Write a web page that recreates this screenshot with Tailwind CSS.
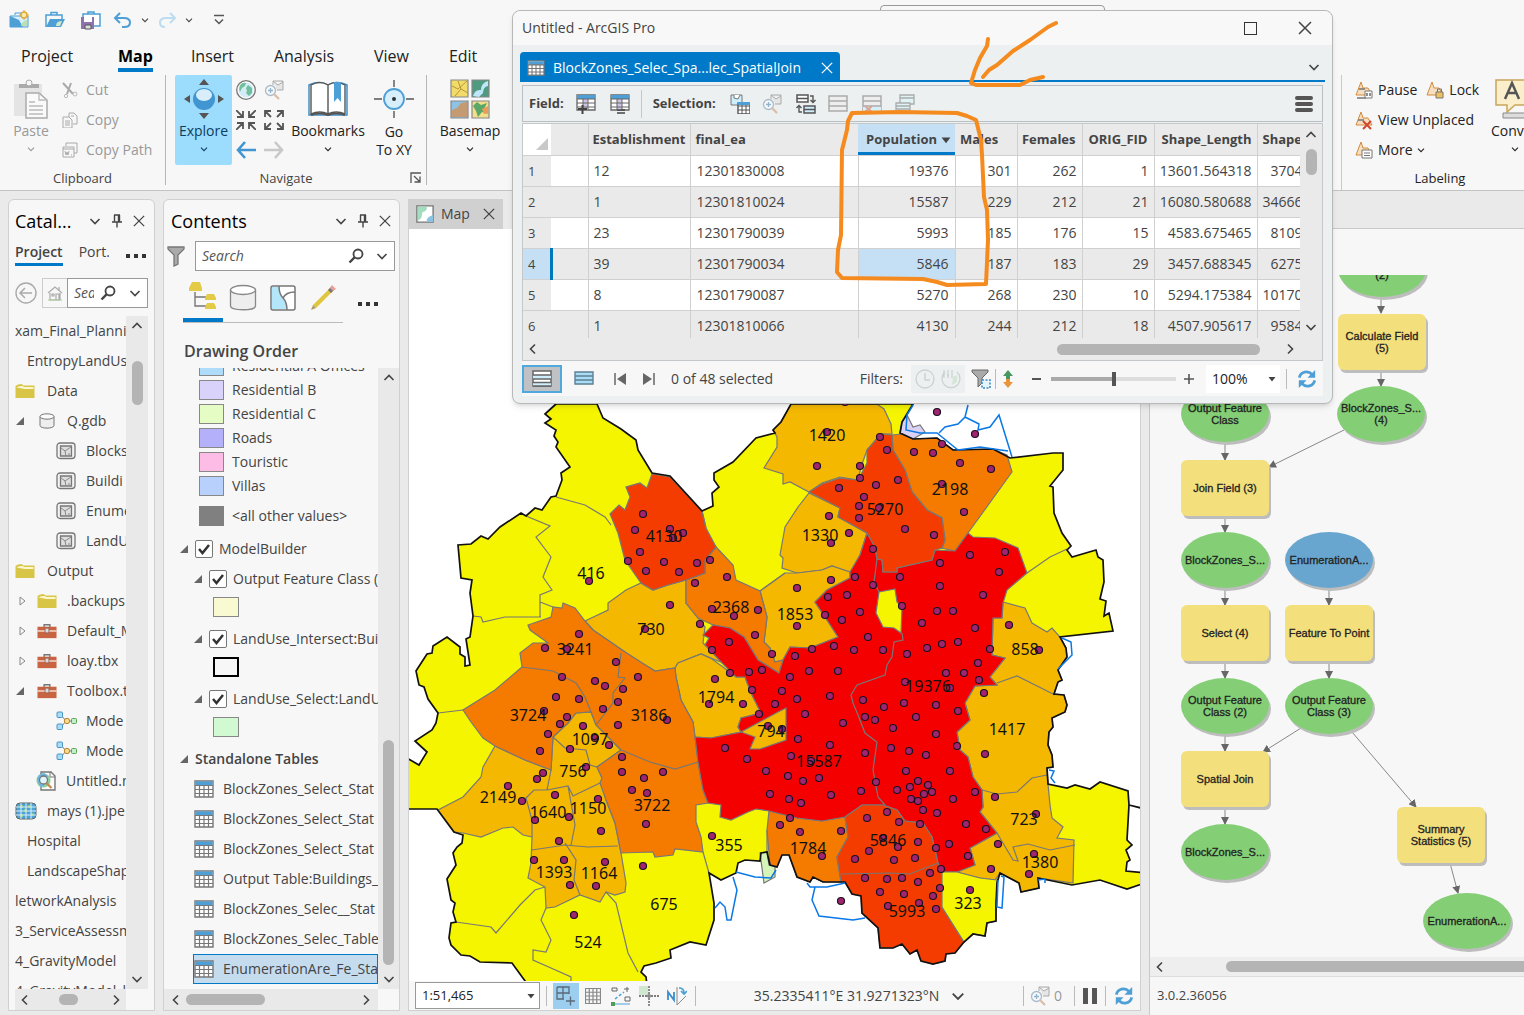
<!DOCTYPE html>
<html lang="en">
<head>
    <meta charset="UTF-8">
    <meta name="viewport" content="width=device-width, initial-scale=1.0">
    <title>Untitled - ArcGIS Pro</title>
    <script src="https://cdn.jsdelivr.net/npm/@tailwindcss/browser@4"></script>
</head>
<body class="h-screen overflow-hidden bg-[#eaeaea] font-['Open_Sans','Noto_Sans',sans-serif] text-sm text-[#444]">
    <!-- Shared icons -->
    <svg class="hidden">
        <symbol id="chevron" viewBox="0 0 12 12"><path d="M1.500 4l4.500 4.500L10.500 4" fill="none" stroke="currentColor" stroke-width="1.600"/></symbol>
        <symbol id="caret" viewBox="0 0 8 8"><path d="M0.500 2h7L4 6.500z" fill="currentColor"/></symbol>
        <symbol id="close" viewBox="0 0 14 14"><path d="M1 1l12 12M13 1L1 13" fill="none" stroke="currentColor" stroke-width="1.500"/></symbol>
        <symbol id="pin" viewBox="0 0 12 14"><path d="M3 1h6M3.500 1v7M8.500 1v7M7.500 1v7M1 8h10M6 8v5.500" fill="none" stroke="currentColor" stroke-width="1.400"/></symbol>
        <symbol id="search" viewBox="0 0 16 16"><circle cx="10" cy="6" r="4.500" fill="none" stroke="currentColor" stroke-width="1.800"/><path d="M6.800 9.200L1.500 14.500" stroke="currentColor" stroke-width="2.400"/></symbol>
        <symbol id="folder" viewBox="0 0 20 16"><path d="M0.500 15V3q2-2 6-2l2 1.500h11V15z" fill="#d9c545"/><path d="M1.500 4.500q2-2 6-1.500l2 1h9v2h-9L7 5.500z" fill="#fbf6d0"/></symbol>
        <symbol id="database" viewBox="0 0 16 16"><path d="M1 3.500v9C1 16 15 16 15 12.500v-9z" fill="#eee" stroke="#777"/><ellipse cx="8" cy="3.500" rx="7" ry="2.700" fill="#fafafa" stroke="#777"/></symbol>
        <symbol id="fc" viewBox="0 0 20 18"><rect x="1" y="1" width="18" height="15.500" rx="3" fill="#f4f4f4" stroke="#777" stroke-width="1.300"/><path d="M4.500 4h11v10h-11z" fill="#ddd" stroke="#777" stroke-width="1.300"/><path d="M5 6l4 3 6-4M9 9l1 5M12 12h2" fill="none" stroke="#888"/></symbol>
        <symbol id="toolbox" viewBox="0 0 21 16"><path d="M7.500 4V1.500h6V4" fill="none" stroke="#777" stroke-width="1.500"/><path d="M0.500 3.500h20v12h-20z" fill="#c96442"/><path d="M0.500 8h20" stroke="#fff" stroke-width="1.200"/><path d="M8.500 5h4v5h-4z" fill="#ddd" stroke="#8a5a4a" stroke-width=".8"/></symbol>
        <symbol id="model" viewBox="0 0 22 20"><path d="M5 4l5 6M5 16l5-6h6" fill="none" stroke="#777"/><rect x="1" y="1" width="5.500" height="5.500" rx="1" fill="#a8dcf7" stroke="#4a94c4"/><rect x="1" y="13" width="5.500" height="5.500" rx="1" fill="#a8dcf7" stroke="#4a94c4"/><circle cx="11" cy="10" r="2.700" fill="#f5dc8c" stroke="#b8862c"/><rect x="15.500" y="7.500" width="5" height="5" rx="1" fill="#c4efc4" stroke="#53a65a"/></symbol>
        <symbol id="mapx" viewBox="0 0 20 20"><path d="M5 1h10l4 4v14H5z" fill="#fafafa" stroke="#777" stroke-width="1.400"/><path d="M14 1v5h5" fill="none" stroke="#777"/><circle cx="7.500" cy="9.500" r="7" fill="#8fcf9d"/><path d="M1 8a7 7 0 0 1 7-6l4 3-4 10-4 1z" fill="#6db5dd"/><circle cx="7.500" cy="9" r="4" fill="#e2f3fc" stroke="#777" stroke-width="1.300"/><path d="M10.500 12l5 5" stroke="#c3884a" stroke-width="2.200"/></symbol>
        <symbol id="raster" viewBox="0 0 22 18"><rect x="1" y="1" width="20" height="16" rx="4" fill="#4da3d8" stroke="#666"/><path d="M5 3h3v3H5zM13 3h3v3h-3zM5 12h3v3H5zM16 11h3v3h-3zM9 7h3v3H9z" fill="#87c67f"/><path d="M6 1v16M11 1v16M16 1v16M1 5h20M1 9h20M1 13h20" stroke="#d9f0fb" fill="none"/></symbol>
        <symbol id="table" viewBox="0 0 20 18"><path d="M1 1h18v16H1z" fill="#fff" stroke="#777" stroke-width="1.400"/><path d="M1.500 1.500h17v4h-17z" fill="#4d9fd6"/><path d="M1 5.500h18M1 9.500h18M1 13.500h18M5.500 5.500V17M10 5.500V17M14.500 5.500V17" stroke="#777" stroke-width="1.200"/></symbol>
        <symbol id="refresh" viewBox="0 0 22 22"><path d="M2.500 9.500C4 3 12 1 16.500 6M19.500 12.500C18 19 10 21 5.500 16" fill="none" stroke="#4d9fd6" stroke-width="3"/><path d="M20 1v8.500h-8.500zM2 21v-8.500h8.500z" fill="#4d9fd6"/></symbol>
        <symbol id="zoomsel" viewBox="0 0 20 20"><path d="M9 1h10v9h-6M9 1v4M9 1l5 4 5-3" fill="#e6e6e6" stroke="#aaa"/><circle cx="6.500" cy="10.500" r="5" fill="#f7f7f7" stroke="#a8bccc" stroke-width="1.300"/><path d="M4 10.500h5M6.500 8v5" stroke="#8fb5d0" stroke-width="1.300"/><path d="M10 14l5 5" stroke="#d8bda8" stroke-width="2.200"/></symbol>
    </svg>

    <div class="flex h-full flex-col">
        <!-- Ribbon -->
        <header class="flex h-[191px] shrink-0 flex-col border-b border-[#c4c4c4] bg-[#f7f7f7]">
            <div class="flex h-10 shrink-0 items-center pl-[9px]">
                <div class="flex items-center gap-4">
                    <button aria-label="New project"><svg class="h-5 w-5" viewBox="0 0 20 20"><path d="M1 6h18v11H1z" fill="#d8effb" stroke="#4d9fd6"/><path d="M6 5V3h6v2" fill="none" stroke="#4d9fd6"/><path d="M1 6l9 4 4 7H1z" fill="#4d9fd6"/><path d="M12 16q1-5 6-6v6z" fill="#b9dfb4"/><circle cx="15" cy="5" r="3" fill="#fbe9a8" stroke="#e0a93c" stroke-width="1.500"/><path d="M15 0v2M15 8v2M10 5h2M18 5h2" stroke="#e0a93c"/></svg></button>
                    <button aria-label="Open project"><svg class="h-5 w-5" viewBox="0 0 20 20"><path d="M1 17V5h16v5M6 5V2.500h6V5" fill="none" stroke="#4d9fd6" stroke-width="1.500"/><path d="M5 9h15l-4 8H1z" fill="#4d9fd6"/><path d="M11 16q0-5 6-5l-2 5z" fill="#cfe8c8"/></svg></button>
                    <button aria-label="Save project"><svg class="h-5 w-5" viewBox="0 0 20 20"><path d="M2 4h17v12H2zM7 4V2h6v2" fill="#fff" stroke="#4d9fd6" stroke-width="1.500"/><path d="M0 7h13v12H0z" fill="#8d74ad"/><path d="M3 7h8v5H3z" fill="#fff"/><path d="M4 15h6v4H4z" fill="#ddd" stroke="#555"/></svg></button>
                </div>
                <div class="ml-3 flex items-center gap-2">
                    <button aria-label="Undo"><svg class="h-5 w-5" viewBox="0 0 20 20"><path d="M7 3L2 8l5 5M2 8h9q6 0 6 4.500T11 17H9" fill="none" stroke="#4d9fd6" stroke-width="2"/></svg></button>
                    <button aria-label="Undo list"><svg class="h-2 w-2"><use href="#chevron"/></svg></button>
                    <button aria-label="Redo"><svg class="h-5 w-5" viewBox="0 0 20 20"><path d="M13 3l5 5-5 5M18 8H9q-6 0-6 4.500T8 17" fill="none" stroke="#bcdcf0" stroke-width="2"/></svg></button>
                    <button aria-label="Redo list"><svg class="h-2 w-2"><use href="#chevron"/></svg></button>
                </div>
                <button aria-label="Customize" class="ml-5"><svg class="h-3 w-3" viewBox="0 0 12 12"><path d="M1 1.500h10M2 5.500l4 4 4-4" fill="none" stroke="#555" stroke-width="1.500"/></svg></button>
            </div>
            <nav class="flex h-8 shrink-0 items-start pt-1 pl-[21px] text-base text-[#222]">
                <a href="#" class="w-[97px]">Project</a>
                <a href="#" class="mr-[38px] border-b-4 border-[#0079c8] font-bold text-black">Map</a>
                <a href="#" class="w-[83px]">Insert</a>
                <a href="#" class="w-[100px]">Analysis</a>
                <a href="#" class="w-[75px]">View</a>
                <a href="#">Edit</a>
            </nav>
            <div class="flex min-h-0 flex-1 pt-[3px]">
                <section class="mb-[5px] flex w-[166px] flex-col border-r border-[#b5b5b5] text-[#999]">
                    <div class="flex h-[94px] shrink-0">
                        <button class="flex w-[62px] flex-col items-center pt-1">
                            <svg class="h-10 w-10" viewBox="0 0 40 40"><path d="M3 5h28v32H3z" fill="#e4e4e4"/><path d="M8 5h20v4H8z" fill="#aaa"/><circle cx="18" cy="4" r="3" fill="#f7f7f7" stroke="#aaa"/><path d="M15 14h13l8 7v18H15z" fill="#fafafa" stroke="#aaa" stroke-width="1.500"/><path d="M28 14v7h8M18 23h6M18 27h14M18 31h14M18 35h14" fill="none" stroke="#bbb" stroke-width="1.300"/></svg>
                            <span class="mt-0.5">Paste</span><svg class="mt-1 h-2 w-2"><use href="#chevron"/></svg>
                        </button>
                        <div class="flex flex-col">
                            <button class="flex h-[30px] items-center gap-2"><svg class="h-4 w-4" viewBox="0 0 16 16"><path d="M1 1l10 11M9 1L5 12" stroke="#aaa" stroke-width="2"/><circle cx="4" cy="14" r="1.700" fill="none" stroke="#bbb"/><circle cx="13" cy="12" r="2" fill="none" stroke="#bbb"/></svg>Cut</button>
                            <button class="flex h-[30px] items-center gap-2"><svg class="h-4 w-4" viewBox="0 0 16 16"><path d="M7 5V1h5l3 3v8h-4M1 5h6l3 3v8H1zM3 9h5M3 11h5M3 13h5M9 4h3" fill="none" stroke="#aaa"/></svg>Copy</button>
                            <button class="flex h-[30px] items-center gap-2"><svg class="h-4 w-4" viewBox="0 0 16 16"><path d="M4 4V1h11v10h-3M1 5h11v10H1z" fill="none" stroke="#aaa"/><path d="M1 7h11" stroke="#aaa"/><path d="M3 9l1 4 1-3 1 3 1-4M9 13h1" fill="none" stroke="#aaa"/></svg>Copy Path</button>
                        </div>
                    </div>
                    <p class="text-center text-[13px] text-[#444]">Clipboard</p>
                </section>
                <section class="mb-[5px] flex w-[261px] flex-col border-r border-[#b5b5b5]">
                    <div class="flex h-[94px] shrink-0 pl-[9px] text-[#222]">
                        <button class="flex h-[90px] w-[57px] flex-col items-center rounded-xs bg-[#9cdcfd] pt-1 text-[#0f3c5c]">
                            <svg class="h-10 w-10" viewBox="0 0 40 40"><circle cx="20" cy="20" r="11" fill="#4196d2"/><ellipse cx="20" cy="16" rx="8" ry="6" fill="#d9eefb"/><path d="M20 0l5 6H15zM20 40l-5-6h10zM0 20l6-4v8zM40 20l-6-4v8z" fill="#555"/></svg>
                            <span class="mt-0.5">Explore</span><svg class="mt-1 h-2 w-2"><use href="#chevron"/></svg>
                        </button>
                        <div class="ml-1 grid grid-cols-2 grid-rows-3 gap-x-2 gap-y-[10px] self-start pt-[5px]">
                            <svg class="h-5 w-5" viewBox="0 0 20 20"><circle cx="10" cy="10" r="9.300" fill="#fff" stroke="#777" stroke-width="1.300"/><circle cx="10" cy="10" r="7.500" fill="#d5ecf8"/><path d="M5 4q3-2 5-1l-1 3-3 2-2 4q-2-4 1-8zM12 5l4 3v5l-3 3-3-3 1-2-1-3z" fill="#6ec09a"/></svg>
                            <svg class="h-5 w-5"><use href="#zoomsel"/></svg>
                            <svg class="h-5 w-5" viewBox="0 0 20 20" fill="none" stroke="#555" stroke-width="1.800"><path d="M0 0l7 7M7 1v6H1M20 0l-7 7M13 1v6h6M0 20l7-7M7 19v-6H1M20 20l-7-7M13 19v-6h6"/></svg>
                            <svg class="h-5 w-5" viewBox="0 0 20 20" fill="none" stroke="#555" stroke-width="1.800"><path d="M1 1l6 6M1 7V1h6M19 1l-6 6M13 1h6v6M1 19l6-6M1 13v6h6M19 19l-6-6M13 19h6v-6"/></svg>
                            <svg class="h-5 w-5" viewBox="0 0 20 20" fill="none" stroke="#4196d2" stroke-width="2.600"><path d="M20 10H2M9 2L2 10l7 8"/></svg>
                            <svg class="h-5 w-5" viewBox="0 0 20 20" fill="none" stroke="#c8c8c8" stroke-width="2.600"><path d="M0 10h18M11 2l7 8-7 8"/></svg>
                        </div>
                        <button class="ml-1 flex w-[80px] flex-col items-center pt-1">
                            <svg class="h-10 w-10" viewBox="0 0 40 40"><path d="M1 36V6Q10 1 20 6 30 1 39 6v30z" fill="#fff" stroke="#3f8fc9" stroke-width="1.500"/><path d="M3 36V6Q12 1 20 6v29Q12 31 3 35zM37 35V6Q28 1 20 6v29q8-4 17 0" fill="#fff" stroke="#555" stroke-width="1.400"/><path d="M3 36q9-3 17 0 8-3 17 0" fill="none" stroke="#555" stroke-width="2"/><path d="M26 3h7v20l-3.500-4-3.500 4z" fill="#4d9fd6"/></svg>
                            <span class="mt-0.5">Bookmarks</span><svg class="mt-1 h-2 w-2"><use href="#chevron"/></svg>
                        </button>
                        <button class="flex w-[52px] flex-col items-center pt-1 leading-[18px]">
                            <svg class="h-10 w-10" viewBox="0 0 40 40"><circle cx="20" cy="20" r="10" fill="#d7eefb" stroke="#4d9fd6" stroke-width="1.800"/><circle cx="20" cy="20" r="2" fill="#333"/><path d="M20 1v7M20 32v7M0 20h8M32 20h8" stroke="#555" stroke-width="1.400"/></svg>
                            <span class="mt-1">Go<br>To XY</span>
                        </button>
                    </div>
                    <div class="flex items-center">
                        <p class="flex-1 pr-1 text-center text-[13px]">Navigate</p>
                        <button aria-label="Navigate options" class="mr-1"><svg class="h-3 w-3" viewBox="0 0 12 12"><path d="M1 11V1h10M4 4l6 6M10 4.500V10H4.500" fill="none" stroke="#555" stroke-width="1.300"/></svg></button>
                    </div>
                </section>
                <button class="flex w-[86px] flex-col items-center self-start pt-1 text-[#222]">
                    <svg class="h-10 w-10" viewBox="0 0 40 40"><g stroke="#888" stroke-width="1.200"><path d="M1 1h17v17H1z" fill="#f1dc6a"/><path d="M22 1h17v17H22z" fill="#4f9b80"/><path d="M1 22h17v17H1z" fill="#8fc3e6"/><path d="M22 22h17v17H22z" fill="#f2df8c"/></g><path d="M2 7l6 3 9-8M5 17l6-7 7 4M8 2l3 8" fill="none" stroke="#b7963b"/><path d="M23 17q2-7 8-6 0-7 7-9v5q-5 1-5 7l-4 4z" fill="#bfe6fa"/><path d="M2 38v-7l5-2 4-5 6-1v15z" fill="#c39a72"/><path d="M23 27l4-4 4 3 6-2-3 6 4 5-6-2-4 5-2-6z" fill="#5aa868"/><path d="M32 30l6-3v7l-4 1z" fill="#ee9a5a"/></svg>
                    <span class="mt-0.5">Basemap</span><svg class="mt-1 h-2 w-2"><use href="#chevron"/></svg>
                </button>
                <section class="ml-auto flex w-[183px] shrink-0 overflow-hidden border-l border-[#c9c9c9] pl-3 text-[#222]">
                    <div class="w-[144px] shrink-0">
                        <div class="flex h-[30px] items-center gap-2">
                            <button class="flex items-center gap-1"><svg class="h-5 w-5" viewBox="0 0 20 20"><path d="M2 15L7 2l2 6h5l4 7H2z" fill="#f6dfc0" stroke="#d48a3c"/><path d="M5 9h6M3 18h9" stroke="#777" stroke-width="1.500"/><path d="M11 11h7v7h-7z" fill="#fff" stroke="#777"/><path d="M13 13v3M16 13v3" stroke="#555" stroke-width="1.300"/></svg>Pause</button>
                            <button class="flex items-center gap-1"><svg class="h-5 w-5" viewBox="0 0 20 20"><path d="M2 15L7 2l2 6h5l4 7H2z" fill="#f6dfc0" stroke="#d48a3c"/><path d="M11 12h7v6h-7z" fill="#eec05e" stroke="#777"/><path d="M12.500 12V9h4v3" fill="none" stroke="#777"/></svg>Lock</button>
                        </div>
                        <button class="flex h-[30px] items-center gap-1"><svg class="h-5 w-5" viewBox="0 0 20 20"><path d="M2 15L7 2l2 6h5l4 7H2z" fill="#f6dfc0" stroke="#d48a3c"/><path d="M4 10h6" stroke="#777" stroke-width="1.500"/><path d="M9 11l8 8M17 11l-8 8" stroke="#d0482c" stroke-width="2"/></svg>View Unplaced</button>
                        <button class="flex h-[30px] items-center gap-1"><svg class="h-5 w-5" viewBox="0 0 20 20"><path d="M2 15L7 2l2 6h5l4 7H2z" fill="#f6dfc0" stroke="#d48a3c"/><path d="M8 10h10v8H8z" fill="#fff" stroke="#777"/><path d="M10 13h6M10 15.500h6" stroke="#777"/></svg>More <svg class="h-2 w-2"><use href="#chevron"/></svg></button>
                        <p class="mt-1 pl-7 text-center text-[13px]">Labeling</p>
                    </div>
                    <button class="-ml-3 flex w-20 shrink-0 flex-col items-start pt-1 pl-[5px]">
                        <svg class="ml-1 h-10 w-12" viewBox="0 0 48 40"><path d="M1 1h40v25H20l-8 7v-7H1z" fill="#fbeecb" stroke="#c9a75c" stroke-width="1.500"/><path d="M10 20L17 4l7 16M12 14h10" fill="none" stroke="#555" stroke-width="2.500"/><path d="M8 34h30v5H8z" fill="#ddd" stroke="#888"/></svg>
                        <span class="mt-0.5">Convert</span><svg class="mt-1 ml-5 h-2 w-2"><use href="#chevron"/></svg>
                    </button>
                </section>
            </div>
        </header>

        <main class="flex min-h-0 flex-1 pt-2">
            <!-- Catalog -->
            <aside class="mb-1 ml-2 flex w-[147px] shrink-0 flex-col rounded-t-md border border-[#d0d0d0] bg-[#f7f7f7] px-[6px]">
                <div class="flex h-[42px] shrink-0 items-center justify-end gap-[10px] pr-[3px]">
                    <h2 class="mr-auto text-lg text-black">Catal...</h2>
                    <button aria-label="Options"><svg class="h-3 w-3"><use href="#chevron"/></svg></button>
                    <button aria-label="Pin"><svg class="h-3.5 w-3"><use href="#pin"/></svg></button>
                    <button aria-label="Close"><svg class="h-3 w-3"><use href="#close"/></svg></button>
                </div>
                <div class="flex h-[26px] shrink-0 items-start">
                    <a href="#" class="border-b-3 border-[#0079c8] pb-px font-semibold">Project</a>
                    <a href="#" class="ml-4 w-[30px] overflow-hidden">Port.</a>
                    <button aria-label="More tabs" class="mt-3 ml-auto flex gap-1 pr-0.5"><i class="h-1 w-1 bg-[#333]"></i><i class="h-1 w-1 bg-[#333]"></i><i class="h-1 w-1 bg-[#333]"></i></button>
                </div>
                <div class="mt-[10px] mb-2 flex h-[30px] shrink-0 items-center">
                    <button aria-label="Back"><svg class="h-[22px] w-[22px]" viewBox="0 0 22 22"><circle cx="11" cy="11" r="10" fill="none" stroke="#aaa" stroke-width="1.400"/><path d="M17 11H6M10 6l-5 5 5 5" fill="none" stroke="#aaa" stroke-width="1.500"/></svg></button>
                    <button aria-label="Home" class="ml-[5px] grid h-[30px] w-[25px] place-items-center border border-r-0 border-[#ccc]"><svg class="h-4 w-4" viewBox="0 0 16 16"><path d="M1 8l7-6 7 6M3 8v7h10V8M12 2v3M5 9h2v2H5zM9 9h3v6H9z" fill="none" stroke="#aaa" stroke-width="1.200"/><path d="M1 15h14" stroke="#a9cf9c"/></svg></button>
                    <div class="flex h-[30px] min-w-0 flex-1 items-center border border-[#999] bg-white px-[6px]">
                        <input aria-label="Search catalog" placeholder="Search" class="w-[20px] min-w-0 italic outline-none placeholder:text-[#555]">
                        <svg class="ml-1.5 h-4 w-4 shrink-0"><use href="#search"/></svg>
                        <svg class="ml-auto h-3 w-3 shrink-0"><use href="#chevron"/></svg>
                    </div>
                </div>
                <div class="flex min-h-0 flex-1">
                    <ul id="catalog" class="w-[111px] shrink-0 overflow-hidden whitespace-nowrap"></ul>
                    <div class="flex flex-1 flex-col items-center bg-[#e9e9e9] py-1">
                        <svg class="h-3 w-3 rotate-180"><use href="#chevron"/></svg>
                        <i class="mt-[29px] h-11 w-[11px] rounded-full bg-[#b4b4b4]"></i>
                        <svg class="mt-auto h-3 w-3"><use href="#chevron"/></svg>
                    </div>
                </div>
                <div class="flex h-[21px] w-[111px] shrink-0 items-center justify-between bg-[#e9e9e9] px-1">
                    <svg class="h-3 w-3 rotate-90"><use href="#chevron"/></svg><i class="ml-3 h-[11px] w-[19px] rounded-full bg-[#b4b4b4]"></i><svg class="ml-4 h-3 w-3 -rotate-90"><use href="#chevron"/></svg>
                </div>
            </aside>

            <!-- Contents -->
            <aside class="mb-1 ml-2 flex w-[237px] shrink-0 flex-col rounded-t-md border border-[#d0d0d0] bg-[#f7f7f7]">
                <div class="flex h-[41px] shrink-0 items-center justify-end gap-[10px] pr-2 pl-[7px]">
                    <h2 class="mr-auto text-lg text-black">Contents</h2>
                    <button aria-label="Options"><svg class="h-3 w-3"><use href="#chevron"/></svg></button>
                    <button aria-label="Pin"><svg class="h-3.5 w-3"><use href="#pin"/></svg></button>
                    <button aria-label="Close"><svg class="h-3 w-3"><use href="#close"/></svg></button>
                </div>
                <div class="flex h-[30px] shrink-0 items-center pr-1 pl-[3px]">
                    <svg class="h-[22px] w-[18px] shrink-0" viewBox="0 0 18 22"><path d="M1 2h16v2l-6 6v9l-4 2V10L1 4z" fill="#aaa" stroke="#777" stroke-width="1.300"/></svg>
                    <div class="ml-[10px] flex h-[30px] min-w-0 flex-1 items-center border border-[#999] bg-white px-[6px]">
                        <input aria-label="Search contents" placeholder="Search" class="w-0 min-w-0 flex-1 italic outline-none placeholder:text-[#555]">
                        <svg class="mr-3 h-4 w-4 shrink-0"><use href="#search"/></svg>
                        <svg class="h-3 w-3 shrink-0"><use href="#chevron"/></svg>
                    </div>
                </div>
                <div class="mt-[11px] flex shrink-0 items-start gap-3 pl-[19px]">
                    <div class="flex w-[160px] border-b border-[#bbb]">
                        <button aria-label="Drawing order" class="w-10 border-b-4 border-[#0079c8] pb-2 pl-[6px]"><svg class="h-7 w-7" viewBox="0 0 28 28"><path d="M6 10v14h12M6 15h12" fill="none" stroke="#777" stroke-width="1.400"/><path d="M3 0h8l2 6v3H0V6zM18 12h7l2 4v2H16v-2zM18 21h7l2 4v2H16v-2z" fill="#e3cb47"/></svg></button>
                        <button aria-label="Data source" class="w-10 pb-2 pl-[6px]"><svg class="h-7 w-7" viewBox="0 0 28 28"><path d="M1.500 6v16c0 5 25 5 25 0V6z" fill="#eee" stroke="#888" stroke-width="1.300"/><ellipse cx="14" cy="6" rx="12.500" ry="4.500" fill="#fff" stroke="#888" stroke-width="1.300"/></svg></button>
                        <button aria-label="Selection" class="w-10 pb-2 pl-[6px]"><svg class="h-7 w-7" viewBox="0 0 28 28"><rect x="2" y="2" width="24" height="24" rx="2" fill="#fff" stroke="#777" stroke-width="1.500"/><path d="M3 3h7q0 8 4 11 4 4 4 11H3z" fill="#b2e6f8"/><path d="M10 2q0 8 4 12 4 4 4 12M14 14q3-6 12-6" fill="none" stroke="#777" stroke-width="1.500"/></svg></button>
                        <button aria-label="Editing" class="w-10 pb-2 pl-[6px]"><svg class="h-7 w-7" viewBox="0 0 28 28"><path d="M4 21L22 3l3 3L7 24z" fill="#e0c63f"/><path d="M19 6l3-3 3 3-3 3z" fill="#777"/><path d="M21 4l2-3 4 4-3 2z" fill="#e8a09c"/><path d="M4 21l3 3-5 2z" fill="#b09a6a"/></svg></button>
                    </div>
                    <button aria-label="More views" class="mt-5 ml-[3px] flex gap-1"><i class="h-1 w-1 bg-[#333]"></i><i class="h-1 w-1 bg-[#333]"></i><i class="h-1 w-1 bg-[#333]"></i></button>
                </div>
                <h3 class="mt-[15px] mb-1 shrink-0 pl-5 text-base leading-[26px] font-semibold">Drawing Order</h3>
                <div class="flex min-h-0 flex-1">
                    <div class="w-[214px] shrink-0 overflow-hidden">
                        <ul id="contents" class="-mt-[14px] ml-[15px] whitespace-nowrap"></ul>
                    </div>
                    <div class="flex flex-1 flex-col items-center bg-[#e9e9e9] py-1">
                        <svg class="h-3 w-3 rotate-180"><use href="#chevron"/></svg>
                        <i class="mt-auto h-[225px] w-[11px] rounded-full bg-[#b4b4b4]"></i>
                        <svg class="mt-2 h-3 w-3"><use href="#chevron"/></svg>
                    </div>
                </div>
                <div class="flex h-[21px] w-[214px] shrink-0 items-center bg-[#e9e9e9] px-[6px]">
                    <svg class="h-3 w-3 rotate-90"><use href="#chevron"/></svg><i class="ml-1 h-[11px] w-[79px] rounded-full bg-[#b4b4b4]"></i><svg class="ml-auto h-3 w-3 -rotate-90"><use href="#chevron"/></svg>
                </div>
            </aside>

            <!-- Map view -->
            <section class="mb-1 ml-2 flex min-w-0 flex-1 flex-col">
                <div class="flex h-[30px] shrink-0">
                    <button class="flex w-[95px] items-center gap-[7px] bg-[#d0d0d0] px-2">
                        <svg class="h-[18px] w-[18px]" viewBox="0 0 20 20"><path d="M1 1h18v18H1z" fill="#fff" stroke="#777" stroke-width="1.500"/><path d="M2 2h10q1 5-5 6 0 8-5 9z" fill="#a4dcc0"/><path d="M12 19q-1-6 7-8v8z" fill="#8cc2e2"/></svg>Map
                        <svg class="ml-auto h-3 w-3"><use href="#close"/></svg>
                    </button>
                </div>
                <svg id="map" class="min-h-0 w-full flex-1 border-x border-[#d0d0d0] bg-white" viewBox="409 229 732 752" preserveAspectRatio="xMinYMax slice">
                    <defs>
                        <path id="outline" d="M556 404L545 414 551 419 545 423 556 430 554 436 558 442 556 447 570 467 561 473 562 480 556 496 551 497 542 510 535 508 526 516 521 513 500 527 488 539 481 536 471 544 458 545 461 578 472 580 470 593 473 616 470 637 466 639 470 665 465 666 465 657 460 654 460 647 447 637 433 646 432 653 427 654 416 671 419 685 424 687 428 699 438 713 436 723 432 730 415 741 427 752 419 765 405 757V809H437L454 832 463 835 462 843 457 847 453 853 456 865 447 879 451 900 455 903 453 912 456 922 451 923 449 938 451 945 461 955 470 956 480 962 512 963 528 985H647L646 977 641 972 644 966 656 963 671 958 670 950 690 942 706 945 714 920 714 903 709 873 721 880 736 873 738 863 745 860 760 861 761 853 767 852 770 865 777 867 782 855 789 855 797 877 810 882 813 877 823 882 845 882 852 894 861 896 862 913 878 928 880 948 893 948 902 944 910 954 917 950 921 961 933 964 945 961 946 954 955 953 964 942 973 934 985 936 987 923 996 921 996 903 997 883 1000 873 1019 883 1021 892 1039 888 1038 878 1072 885 1100 880 1127 889 1145 883V873L1126 871 1127 862 1130 860 1126 850 1132 845 1127 840 1129 805 1128 791 1100 782 1090 789 1075 785 1067 788 1048 784 1047 768 1053 767 1052 755 1048 745 1049 732 1053 727 1052 718 1065 712 1067 705 1064 695 1054 694 1058 682 1062 680 1058 670 1067 657 1066 648 1060 637 1113 631 1109 613 1104 616 1106 601 1100 599 1104 582 1103 560 1098 557 1096 550 1072 557 1067 550 1071 546 1062 533 1054 513 1053 487 1050 486 1063 470 1063 453 1053 453 1010 458 993 449 953 450 937 438 913 439 900 433 902 422 913 404H791L781 422 773 430 775 433 756 438 733 462 714 473 714 480 719 487 712 493 713 506 702 511 670 476 652 473 638 450 636 440 621 429 603 418 597 404z"/>
                    </defs>
                    <use href="#outline" fill="#f5f500"/>
                    <g stroke="#777" stroke-width="1.200">
                        <g fill="#f5b800">
                            <path d="M791 404L781 422 773 430 777 437 777 447 764 468 783 474 783 484 790 482 809 492 822 483 840 477 858 480 861 467 867 450 881 434 892 434 891 424 884 409 877 404z"/>
                            <path d="M809 493L840 508 838 517 867 533 860 555 850 573 832 566 822 570 797 573 782 568 783 558 780 555 785 527 798 507z"/>
                            <path d="M785 573L797 573 822 570 832 566 850 572 850 578 827 590 815 602 827 620 838 637 810 648 790 647 783 660 775 662 770 648 764 642 767 617 760 591z"/>
                            <path d="M585 621L608 610 608 603 626 590 641 583 653 590 668 585 686 580 686 603 698 618 705 627 703 643 723 663 701 654 678 663 675 668 655 671 641 663 625 652 593 630z"/>
                            <path d="M678 663L701 654 712 659 723 667 736 677 745 677 751 693 761 713 741 718 738 727 741 732 711 738 695 737 693 722 681 700 676 677 675 668z"/>
                            <path d="M495 746L525 760 551 770 553 737 568 723 576 713 591 712 596 725 621 750 597 767 602 778 606 800 615 823 621 853 626 883 625 892 615 895 606 892 600 902 580 895 555 907 546 908 545 887 528 878 531 863 532 837 523 835 513 827 503 828 481 837 463 833 454 832 438 810 463 797 481 777 483 767z"/>
                            <path d="M1003 602L1025 608 1032 623 1047 632 1052 628 1060 637 1066 648 1067 657 1058 670 1062 680 1058 682 1054 694 1064 695 1067 705 1065 712 1052 718 1053 727 1049 732 1048 745 1052 755 1053 767 1047 768 1048 784 1050 805 1052 818 1063 827 1057 838 1074 840 1073 883 1038 878 1039 888 1021 892 1019 883 1000 873 995 880 980 878 957 872 975 865 970 848 997 833 980 812 983 807 982 790 973 777 968 757 960 750 957 732 970 720 965 703 975 686 997 685 990 677 1005 658 992 655 993 618 1002 618z"/>
                        </g>
                        <g fill="#f57a00">
                            <path d="M892 435L902 434 913 439 937 438 953 450 993 449 1007 455 1012 472 968 533 955 551 942 548 945 540 942 518 927 510 912 492 905 470 893 450z"/>
                            <path d="M686 580L705 573 705 560 716 547 733 565 736 580 760 591 767 617 764 642 770 648 775 662 783 660 779 673 758 660 744 637 730 628 713 625 698 618 686 603z"/>
                            <path d="M563 603L575 608 585 621 593 630 625 652 655 671 675 668 676 677 681 700 693 722 695 737 698 762 703 790 708 803 696 805 696 822 701 837 703 852 675 849 673 855 655 857 653 852 621 853 615 823 606 800 600 783 602 778 597 767 621 750 596 725 591 712 576 713 568 723 553 737 551 770 525 760 495 746 483 738 471 722 463 710 495 690 522 667 520 653 533 643 548 643 530 630 528 625 551 617 553 607 562 608z"/>
                            <path d="M769 811L797 818 822 821 845 817 848 837 837 857 841 882 823 882 813 877 810 882 797 877 789 855 782 855 777 867 770 865 767 830z"/>
                        </g>
                        <g fill="#f50000">
                            <path d="M695 737L711 738 741 732 738 727 741 718 761 713 751 693 745 677 736 677 723 664 705 645 709 638 703 635 713 625 730 628 744 637 758 660 779 673 783 660 790 647 810 648 838 637 827 620 815 602 827 590 850 578 850 572 860 555 867 533 875 547 877 559 882 560 883 572 897 572 897 568 932 560 935 550 955 551 968 533 973 537 995 538 1018 548 1027 573 1007 590 1003 603 1002 618 993 618 992 655 1005 658 990 677 997 685 975 686 965 703 970 720 957 732 960 750 968 757 973 777 982 790 983 807 980 812 997 833 970 848 975 865 957 872 942 872 938 863 932 837 923 823 905 821 897 810 883 805 862 805 845 817 822 821 797 818 769 811 756 809 748 812 731 820 720 817 721 805 708 803 703 790 698 762z"/>
                        </g>
                        <g fill="#f53c00">
                            <path d="M809 492L822 484 840 478 858 480 867 463 867 450 881 434 892 435 893 450 905 470 912 492 927 510 942 518 945 540 942 548 935 550 932 560 897 568 897 572 883 572 882 560 877 559 875 547 867 533 838 517 840 508z"/>
                            <path d="M610 514L619 505 625 510 630 497 626 487 640 483 647 488 652 474 670 477 702 511 706 528 716 547 705 560 705 573 686 580 668 585 653 590 641 583 625 560 618 533z"/>
                            <path d="M845 817L862 805 883 805 897 810 905 821 923 823 932 837 938 863 942 872 942 907 964 942 955 953 946 954 945 961 933 964 921 961 917 950 910 954 902 944 893 948 880 948 878 928 862 913 861 896 852 894 845 882 841 882 837 857 848 837z"/>
                        </g>
                        <path fill="#f5b800" d="M786 708V740L760 749H750L755 737 741 732 778 712z"/>
                        <path fill="#f5f500" d="M879 592L895 589 897 602 902 607 901 633 894 628 883 627 876 613z"/>
                        <path fill="#f5f500" d="M942 872L957 872 980 878 997 880 996 921 987 923 985 936 973 934 964 942 942 907z"/>
                        <!-- Block boundaries inside one class -->
                        <path fill="none" d="M877 559L874 582 879 592M902 633L903 640 894 642 892 657 887 665 885 675 857 685 851 695 853 703 858 715 865 733 877 742 873 770 878 797 885 805M841 874L890 873 910 874 938 863M997 683L1017 676 1055 695M982 790L997 794 1017 792 1032 778 1047 775M997 833L1013 860 1018 861 1013 847 1028 844 1050 850 1075 845M522 667L553 671 576 683 585 697 591 712M621 653L618 677 625 678 613 693 613 703 596 725M621 750L650 762 675 769 698 762M551 770L547 790 534 790 526 798 532 820 532 837M553 737L565 748 586 750 590 765 597 767M547 790L568 786 573 796 600 783M568 786L575 825 571 845M532 850L565 845 588 847 618 846M565 843L576 860 574 880 580 895M556 497L585 505 605 517 611 525M526 516L550 526 536 537 551 557 543 577 552 590 540 595 540 617M473 616L481 617 483 622 505 617 541 617M540 602L553 607M438 713L463 710M456 922L491 927 496 933 520 905 535 890 545 887M546 908L541 920 551 940 546 952 533 950 533 960 551 968 571 977 571 981M606 892L616 903 628 953 638 972M703 852L709 873M760 591L785 573M1027 573L1050 557 1067 549M702 511L706 528M767 852V830"/>
                        <path fill="#d9d2f5" d="M900 433L902 422 907 415 913 427 920 425 925 432 913 439z"/>
                        <path fill="#d5f5b8" d="M760 853L767 852 769 865 775 866 775 877 764 883z"/>
                    </g>
                    <use href="#outline" fill="none" stroke="#111" stroke-width="1.700"/>
                    <path d="M913 405L907 415 906 430 920 433 937 433 958 450 980 447 1008 451M968 405L965 417 958 424 945 427 939 433M965 417L979 424 978 430 990 427 999 415 1012 457M1062 638L1071 642 1072 655 1058 669M1049 770L1054 771 1051 778 1055 783M1001 876L1004 877 1002 908 997 907 998 880M1038 880L1045 879 1045 883M815 887L812 900 819 916 853 920 865 918M807 883L810 887 827 887 845 883M736 872L755 877 771 878 776 870M733 877L737 890 731 920 727 920 725 907 720 902 715 908" fill="none" stroke="#0a78e6" stroke-width="1.500"/>
                    <path d="M1129 805L1141 808" stroke="#111" stroke-width="1.700"/>
                    <g id="dots" fill="#a0246e" stroke="#1c1020" stroke-width="1.200"></g>
                    <g id="labels" class="font-['Noto_Sans',sans-serif] text-[16px]" fill="#111" text-anchor="middle"></g>
                </svg>
                <div class="flex h-[30px] shrink-0 items-center border border-t-0 border-[#d0d0d0] bg-[#f7f7f7] pr-[6px] pl-[6px]">
                    <label class="flex h-[27px] w-[125px] items-center border border-[#999] bg-white pr-1">
                        <select aria-label="Scale" class="flex-1 appearance-none pl-1.5 text-[13px] text-[#222] outline-none"><option>1:51,465</option></select>
                        <svg class="h-2 w-2"><use href="#caret"/></svg>
                    </label>
                    <i class="mx-[6px] h-5 w-px bg-[#bbb]"></i>
                    <button aria-label="Snapping" class="grid h-[26px] w-[26px] place-items-center bg-[#9ccef0]"><svg class="h-5 w-5" viewBox="0 0 20 20"><path d="M1 1h12v7M1 1v12h7M1 7h12M7 1v12M10 15h9M14.500 10.500v9" fill="none" stroke="#5a6a78" stroke-width="1.300"/></svg></button>
                    <button aria-label="Grid" class="ml-[6px]"><svg class="h-4 w-4" viewBox="0 0 16 16"><path d="M.5.500h15v15H.5zM4.250.500v15M8 .5v15M11.750.500v15M.5 4.250h15M.5 8h15M.5 11.750h15" fill="none" stroke="#888" stroke-width="1.200"/></svg></button>
                    <button aria-label="Constraints" class="ml-[10px]"><svg class="h-5 w-5" viewBox="0 0 20 20"><path d="M1 2h5v3H1zM14 11h5v4h-5zM13 3h5M16 1v5" fill="none" stroke="#666"/><path d="M4 13L13 6" stroke="#4d9fd6" stroke-dasharray="3 2" stroke-width="1.500"/><path d="M1 18h18" stroke="#4d9fd6"/><path d="M0 16h4v4H0z" fill="#4f9b5c"/></svg></button>
                    <button aria-label="Inference" class="ml-2"><svg class="h-5 w-5" viewBox="0 0 20 20"><path d="M0 0h9v9H0z" fill="#cfe8cf"/><path d="M10 0v20M0 10h20" stroke="#555" stroke-width="1.300" stroke-dasharray="2 1"/><circle cx="10" cy="10" r="2" fill="#888"/></svg></button>
                    <button aria-label="North" class="ml-2"><svg class="h-5 w-5" viewBox="0 0 20 20"><path d="M1 14V6l6 8V6" fill="none" stroke="#3c8ccb" stroke-width="1.800"/><path d="M10 1v18l9-9" fill="none" stroke="#888"/><path d="M12 2q5 0 5 5M14 5l3 3 3-3" fill="none" stroke="#4d9fd6" stroke-width="1.700"/></svg></button>
                    <i class="ml-2 h-5 w-px bg-[#bbb]"></i>
                    <span class="ml-auto">35.2335411°E 31.9271323°N</span>
                    <svg class="mr-auto ml-3 h-3.5 w-3.5"><use href="#chevron"/></svg>
                    <i class="h-5 w-px bg-[#bbb]"></i>
                    <svg class="ml-1.5 h-5 w-5"><use href="#zoomsel"/></svg><span class="mx-1 text-[#999]">0</span>
                    <i class="mx-2 h-5 w-px bg-[#bbb]"></i>
                    <button aria-label="Pause drawing" class="flex gap-1"><i class="h-4 w-[5px] bg-[#555]"></i><i class="h-4 w-[5px] bg-[#555]"></i></button>
                    <i class="mx-2 h-5 w-px bg-[#bbb]"></i>
                    <button aria-label="Refresh"><svg class="h-5 w-5"><use href="#refresh"/></svg></button>
                </div>
            </section>

            <!-- Model builder -->
            <section class="ml-2 flex w-[375px] shrink-0 flex-col">
                <div class="h-[29px] shrink-0"></div>
                <div class="flex min-h-0 flex-1 flex-col border-t border-l border-[#c8c8c8] bg-[#f7f7f7] pt-[46px]">
                    <svg class="min-h-0 w-full flex-1" viewBox="1150 275 374 682" preserveAspectRatio="xMinYMin slice">
                        <defs><marker id="arrow" viewBox="0 0 8 8" refX="7" refY="4" markerWidth="8" markerHeight="8" orient="auto" markerUnits="userSpaceOnUse"><path d="M0 0l8 4-8 4z" fill="#666"/></marker></defs>
                        <g id="links" fill="none" stroke="#888" stroke-width="1"></g>
                        <g id="nodes" class="font-['Liberation_Sans',sans-serif] text-[11px]" text-anchor="middle"></g>
                    </svg>
                    <div class="flex h-[19px] shrink-0 items-center bg-[#eee] pl-1">
                        <svg class="h-3 w-3 rotate-90"><use href="#chevron"/></svg><i class="ml-[60px] h-[11px] flex-1 rounded-l-full bg-[#b4b4b4]"></i>
                    </div>
                    <div class="flex h-[39px] shrink-0 items-center border-t border-[#ddd] pb-0.5 pl-[7px] text-[13px]">3.0.2.36056</div>
                </div>
            </section>
        </main>
    </div>

    <!-- Search box behind the floating window -->
    <input aria-label="Command search" class="absolute top-[5px] left-[880px] h-[26px] w-[225px] rounded border border-[#999] bg-[#f7f7f7]">

    <!-- Floating attribute table -->
    <div class="absolute top-[10px] left-[512px] flex h-[394px] w-[821px] flex-col rounded-lg border border-[#b8b8b8] bg-[#ecf0f1] px-[7px] pb-[7px] shadow-md">
        <div class="-mx-[7px] flex h-[34px] shrink-0 items-center rounded-t-lg bg-[#f8f8f8] px-[9px]">
            <h1 class="mr-auto">Untitled - ArcGIS Pro</h1>
            <button aria-label="Maximize" class="mr-[41px] h-[13px] w-[13px] border border-[#333]"></button>
            <button aria-label="Close window" class="mr-[11px]"><svg class="h-3.5 w-3.5"><use href="#close"/></svg></button>
        </div>
        <div class="mt-2 flex h-[29px] shrink-0 items-center border-b-2 border-[#0079c8] pr-[5px]">
            <button class="flex h-[29px] w-[320px] items-center gap-2 rounded-t bg-[#0079c8] px-[7px] pt-0.5 text-white">
                <svg class="h-4 w-[18px]"><use href="#table"/></svg>
                <span>BlockZones_Selec_Spa...lec_SpatialJoin</span>
                <svg class="ml-auto h-3 w-3"><use href="#close"/></svg>
            </button>
            <svg class="ml-auto h-3 w-3"><use href="#chevron"/></svg>
        </div>
        <div class="mx-[2px] mt-[3px] flex h-[37px] shrink-0 items-center border border-[#b9bfc2] pl-[6px] text-[13px] font-bold">
            <span>Field:</span>
            <button aria-label="Add field" class="ml-3"><svg class="h-5 w-5" viewBox="0 0 20 20"><path d="M1 1h18v15H1z" fill="#fff" stroke="#666" stroke-width="1.300"/><path d="M1 1h18v4H1z" fill="#4d9fd6"/><path d="M7 5h5v11H7z" fill="#cfc3e6"/><path d="M1 5h18M1 9h18M1 13h18M7 5v11M12 5v11" stroke="#666"/><path d="M2 15h9M6.500 11v9" stroke="#444" stroke-width="2"/></svg></button>
            <button aria-label="Calculate field" class="ml-[14px]"><svg class="h-5 w-5" viewBox="0 0 20 20"><path d="M1 1h18v15H1z" fill="#fff" stroke="#666" stroke-width="1.300"/><path d="M1 1h18v4H1z" fill="#4d9fd6"/><path d="M7 5h5v11H7z" fill="#cfc3e6"/><path d="M1 5h18M1 9h18M1 13h18M7 5v11M12 5v11" stroke="#666"/><path d="M7 16h8M7 19h8" stroke="#444" stroke-width="1.600"/></svg></button>
            <i class="mx-[11px] h-7 w-px bg-[#c4c8ca]"></i>
            <span>Selection:</span>
            <button aria-label="Select by attributes" class="ml-[14px]"><svg class="h-5 w-5" viewBox="0 0 20 20"><path d="M1 1h11v10H1z" fill="#cdeefa" stroke="#777"/><path d="M4 1v3l4 1 2-4" fill="#fff" stroke="#777"/><path d="M8 9h12v11H8z" fill="#fff" stroke="#555" stroke-width="1.400"/><path d="M8 8h12v3H8z" fill="#4d9fd6"/><path d="M8 12h12M8 16h12M12 11v9M16 11v9" stroke="#555"/></svg></button>
            <button aria-label="Zoom to selection" class="ml-3"><svg class="h-5 w-5"><use href="#zoomsel"/></svg></button>
            <button aria-label="Switch selection" class="ml-[14px]"><svg class="h-5 w-5" viewBox="0 0 20 20"><path d="M1 1h11v7H1zM1 4.500h11" fill="#fff" stroke="#555" stroke-width="1.500"/><path d="M8 12h11v7H8zM8 15.500h11" fill="#cdeefa" stroke="#555" stroke-width="1.500"/><path d="M14 2h3v6M14.500 6l2.500 2.500L19.500 6M6 18H3v-6M.5 14L3 11.500 5.500 14" fill="none" stroke="#555" stroke-width="1.400"/></svg></button>
            <button aria-label="Clear selection" class="ml-3"><svg class="h-5 w-5" viewBox="0 0 20 20"><path d="M1 2h18v15H1zM1 7h18M1 12h18" fill="#eee" stroke="#aaa" stroke-width="1.500"/></svg></button>
            <button aria-label="Delete selection" class="ml-[14px]"><svg class="h-5 w-5" viewBox="0 0 20 20"><path d="M1 2h18v15H1zM1 7h18M1 12h18" fill="#eee" stroke="#aaa" stroke-width="1.500"/><path d="M1 13h18v4H1z" fill="#d5f0f8"/><path d="M3 12l7 6M10 12l-7 6" stroke="#dba395" stroke-width="2"/></svg></button>
            <button aria-label="Copy selection" class="ml-[13px]"><svg class="h-5 w-5" viewBox="0 0 20 20"><path d="M5 1h14v9H5zM5 4h14" fill="#dff3f7" stroke="#aaa" stroke-width="1.300"/><path d="M1 9h14v9H1zM1 12h14M1 15h14" fill="#dff3f7" stroke="#aaa" stroke-width="1.300"/></svg></button>
            <button aria-label="Table menu" class="mr-[9px] ml-auto flex flex-col gap-[2px]"><i class="h-1 w-[18px] rounded-xs bg-[#555]"></i><i class="h-1 w-[18px] rounded-xs bg-[#555]"></i><i class="h-1 w-[18px] rounded-xs bg-[#555]"></i></button>
        </div>
        <div class="mx-[2px] mt-px flex min-h-0 flex-1 flex-col border border-[#c4c8ca] bg-[#eaeaea]">
            <div class="flex min-h-0 flex-1">
                <div class="flex-1 overflow-hidden">
                    <table class="w-[810px] table-fixed border-collapse text-[13px] whitespace-nowrap">
                        <colgroup><col class="w-[28px]"><col class="w-[37px]"><col class="w-[102px]"><col class="w-[168px]"><col class="w-[97px]"><col class="w-[62px]"><col class="w-[65px]"><col class="w-[72px]"><col class="w-[103px]"><col class="w-[76px]"></colgroup>
                        <thead>
                            <tr class="h-[31px] bg-[#eaeaea]">
                                <th class="bg-white pt-2 pl-3"><svg class="h-3.5 w-3.5" viewBox="0 0 14 14"><path d="M13 1v12H1z" fill="#c8c8c8"/></svg></th>
                                <th class="border-r border-[#d0d0d0]"></th>
                                <th class="border-r border-[#d0d0d0] text-center font-bold">Establishment</th>
                                <th class="pl-[5px] text-left font-bold">final_ea</th>
                                <th class="bg-[#c5e0f5] p-0 align-top"><span class="flex h-[31px] items-center justify-end gap-1 border-b-3 border-[#0079c8] pt-[3px] pr-1 font-bold">Population<svg class="h-2.5 w-2.5"><use href="#caret"/></svg></span></th>
                                <th class="border-r border-[#d0d0d0] pl-[5px] text-left font-bold">Males</th>
                                <th class="border-r border-[#d0d0d0] pr-[6px] text-right font-bold">Females</th>
                                <th class="border-r border-[#d0d0d0] pr-[6px] text-right font-bold">ORIG_FID</th>
                                <th class="border-r border-[#d0d0d0] pr-[5px] text-right font-bold">Shape_Length</th>
                                <th class="pl-[5px] text-left font-bold">Shape_Area</th>
                            </tr>
                        </thead>
                        <tbody id="rows" class="text-sm"></tbody>
                    </table>
                </div>
                <div class="flex w-[22px] flex-col items-center py-[5px]">
                    <svg class="h-3 w-3 rotate-180"><use href="#chevron"/></svg>
                    <i class="mt-2 h-[26px] w-[11px] rounded-full bg-[#b4b4b4]"></i>
                    <svg class="mt-auto h-3 w-3"><use href="#chevron"/></svg>
                </div>
            </div>
            <div class="flex h-[22px] shrink-0 items-center pr-[26px] pl-1">
                <svg class="h-3 w-3 rotate-90"><use href="#chevron"/></svg>
                <i class="mr-6 ml-auto h-[11px] w-[203px] rounded-full bg-[#b4b4b4]"></i>
                <svg class="h-3 w-3 -rotate-90"><use href="#chevron"/></svg>
            </div>
        </div>
        <div class="mx-[2px] flex h-[35px] shrink-0 items-center bg-[#f7f7f7]">
            <button aria-label="Show all records" class="grid h-[28px] w-10 place-items-center border-2 border-[#4fa9dc] bg-[#bfc1c5]"><svg class="h-5 w-5" viewBox="0 0 20 18"><path d="M1 1h18v15H1z" fill="#fff" stroke="#666" stroke-width="1.500"/><path d="M1 5h18v4H1zM1 12.500h18V16H1z" fill="#cdeefa"/><path d="M1 5h18M1 9h18M1 12.500h18M1 16h18" stroke="#666" stroke-width="1.300"/></svg></button>
            <button aria-label="Show selected records" class="ml-3"><svg class="h-4 w-5" viewBox="0 0 20 16"><path d="M1 1h18v12H1zM1 5h18M1 9h18" fill="#a9dcf5" stroke="#5d7f94" stroke-width="1.400"/></svg></button>
            <button aria-label="First" class="ml-5"><svg class="h-3 w-3" viewBox="0 0 12 12"><path d="M1 0v12" stroke="#666" stroke-width="1.500"/><path d="M12 0v12L3 6z" fill="#666"/></svg></button>
            <button aria-label="Last" class="ml-[17px]"><svg class="h-3 w-3" viewBox="0 0 12 12"><path d="M11 0v12" stroke="#666" stroke-width="1.500"/><path d="M0 0v12l9-6z" fill="#666"/></svg></button>
            <span class="ml-4">0 of 48 selected</span>
            <span class="mr-2 ml-auto">Filters:</span>
            <div class="flex h-[28px] items-center gap-[6px] bg-[#edf0f0] px-1">
                <svg class="h-5 w-5" viewBox="0 0 20 20"><circle cx="10" cy="10" r="9" fill="none" stroke="#ccd2d2" stroke-width="1.300"/><path d="M10 4v7h5" fill="none" stroke="#ccd2d2" stroke-width="1.500"/></svg>
                <svg class="h-5 w-5" viewBox="0 0 20 20"><path d="M4 3a9 9 0 1 0 12 0M3 1v8M7 1v8M11 1v8M2 4h2M6 6h2" fill="none" stroke="#ccd2d2" stroke-width="1.300"/><path d="M12 8l4-2v7l-5 3z" fill="#d4e6d8"/></svg>
            </div>
            <button aria-label="Filter by selection" class="ml-[6px]"><svg class="h-5 w-5" viewBox="0 0 20 20"><path d="M1 1h16v2l-6 6v5l-4 4V9L1 3z" fill="#aaa" stroke="#666"/><path d="M11 11h8v8h-8z" fill="#e6f5fc" stroke="#3c8ccb" stroke-width="1.600" stroke-dasharray="2 1.500"/></svg></button>
            <i class="mr-[6px] ml-1 h-5 w-px bg-[#bbb]"></i>
            <svg class="h-[18px] w-3" viewBox="0 0 12 18"><path d="M6 0l5 6H8v3H4V6H1z" fill="#4a9660"/><path d="M6 18l5-6H8V9H4v3H1z" fill="#e7963c"/></svg>
            <i class="mr-[10px] ml-[18px] h-[2px] w-[9px] bg-[#555]"></i>
            <input type="range" aria-label="Zoom" class="h-4 w-[125px] appearance-none bg-[linear-gradient(#aaa,#aaa),linear-gradient(#ddd,#ddd)] bg-[length:50%_4px,100%_4px] bg-[position:left,left] bg-no-repeat [&::-webkit-slider-thumb]:h-3.5 [&::-webkit-slider-thumb]:w-1 [&::-webkit-slider-thumb]:appearance-none [&::-webkit-slider-thumb]:bg-[#555]">
            <svg class="ml-2 h-2.5 w-2.5" viewBox="0 0 10 10"><path d="M0 5h10M5 0v10" stroke="#555" stroke-width="1.600"/></svg>
            <label class="ml-3 flex h-[28px] w-[74px] items-center bg-white pr-1 pl-[6px]">
                <select aria-label="Zoom level" class="flex-1 appearance-none text-[#222] outline-none"><option>100%</option></select>
                <svg class="h-2 w-2"><use href="#caret"/></svg>
            </label>
            <i class="mx-[6px] h-5 w-px bg-[#bbb]"></i>
            <button aria-label="Refresh table" class="mr-[6px] ml-1"><svg class="h-5 w-5"><use href="#refresh"/></svg></button>
        </div>
    </div>

    <!-- Hand-drawn marks -->
    <svg class="pointer-events-none absolute top-0 left-0 h-[300px] w-[1100px]" viewBox="0 0 1100 300" fill="none" stroke="#f58a1f" stroke-width="4" stroke-linecap="round" stroke-linejoin="round">
        <path d="M1056 23L1048 27 1030 40 1013 51 997 65 989 70 983 77M988 39L987 46 980 58 975 70 971 83 976 85 1020 85 1030 80 1043 77"/>
        <path d="M852 113L900 112 957 113 967 116 976 120 981 140 982 155 984 197 987 210 988 240 986 284 947 285 937 282 923 279 842 278 837 272 838 250 841 235 842 150 847 130 848 121z"/>
    </svg>

    <script>
        const use = (id, cls) => `<svg class="${cls}"><use href="#${id}"/></svg>`;
        const open = '<svg class="mr-3 h-2.5 w-2.5 shrink-0" viewBox="0 0 10 10"><path d="M9 1v8H1z" fill="#666"/></svg>';
        const shut = '<svg class="mr-2.5 ml-1 h-2.5 w-2 shrink-0" viewBox="0 0 8 10"><path d="M1 1l5 4-5 4z" fill="none" stroke="#888"/></svg>';

        // Catalog tree: [indent class, expander, icon, icon size, label]
        const catalog = [
            ['', '', '', '', 'xam_Final_Planni'],
            ['pl-3', '', '', '', 'EntropyLandUs'],
            ['gap-3', '', 'folder', 'h-4 w-5', 'Data'],
            ['', open, 'database', 'ml-0.5 mr-3 h-4 w-4', 'Q.gdb'],
            ['pl-[41px] gap-[10px]', '', 'fc', 'h-[18px] w-5', 'Blocks'],
            ['pl-[41px] gap-[10px]', '', 'fc', 'h-[18px] w-5', 'Buildi'],
            ['pl-[41px] gap-[10px]', '', 'fc', 'h-[18px] w-5', 'Enume'],
            ['pl-[41px] gap-[10px]', '', 'fc', 'h-[18px] w-5', 'LandU'],
            ['gap-3', '', 'folder', 'h-4 w-5', 'Output'],
            ['', shut, 'folder', 'mr-2.5 h-4 w-5', '.backups'],
            ['', shut, 'toolbox', 'mr-2.5 h-4 w-5', 'Default_M'],
            ['', shut, 'toolbox', 'mr-2.5 h-4 w-5', 'loay.tbx'],
            ['', open, 'toolbox', 'mr-2.5 h-4 w-5', 'Toolbox.t'],
            ['pl-[41px] gap-2', '', 'model', 'h-5 w-[22px]', 'Mode'],
            ['pl-[41px] gap-2', '', 'model', 'h-5 w-[22px]', 'Mode'],
            ['pl-[21px] gap-[10px]', '', 'mapx', 'h-5 w-5', 'Untitled.m'],
            ['gap-[10px]', '', 'raster', 'h-[18px] w-[22px]', 'mays (1).jpe'],
            ['pl-3', '', '', '', 'Hospital'],
            ['pl-3', '', '', '', 'LandscapeShap'],
            ['', '', '', '', 'letworkAnalysis'],
            ['', '', '', '', '3_ServiceAssessm'],
            ['', '', '', '', '4_GravityModel'],
            ['', '', '', '', '4_GravityModel_l'],
        ];
        document.getElementById('catalog').innerHTML = catalog.map(([pad, exp, icon, size, name]) =>
            `<li class="flex h-[30px] items-center ${pad}">${exp}${icon ? use(icon, 'shrink-0 ' + size) : ''}<span>${name}</span></li>`
        ).join('');

        // Contents: legend entries, layers, tables
        const legend = [
            ['bg-[#b0dcfc]', 'Residential A Offices'], ['bg-[#d9d2fa]', 'Residential B'], ['bg-[#e6fcc5]', 'Residential C'],
            ['bg-[#b5b0fa]', 'Roads'], ['bg-[#fcbce6]', 'Touristic'], ['bg-[#b8d0fc]', 'Villas'],
        ].map(([bg, name]) =>
            `<li class="flex h-6 items-center gap-2 pl-5"><i class="h-5 w-[25px] border border-[#888] ${bg}"></i>${name}</li>`
        ).join('') + '<li class="flex h-9 items-center gap-2 pl-5"><i class="h-5 w-[25px] bg-[#808080]"></i>&lt;all other values&gt;</li>';
        const layer = (pad, name) =>
            `<li class="flex h-[30px] items-center ${pad}"><svg class="mr-1.5 h-2.5 w-2.5 shrink-0" viewBox="0 0 10 10"><path d="M9 1v8H1z" fill="#666"/></svg><label class="flex items-center gap-1.5"><span class="grid h-[18px] w-[18px] shrink-0"><input type="checkbox" checked class="col-start-1 row-start-1 h-[18px] w-[18px] appearance-none rounded-xs border border-[#777] bg-white"><svg class="col-start-1 row-start-1 h-[18px] w-[18px]" viewBox="0 0 18 18"><path d="M4 9l3.500 4L14 5" fill="none" stroke="#333" stroke-width="2.500"/></svg></span>${name}</label></li>`;
        const swatch = cls => `<li class="flex h-[30px] items-center pb-1 pl-[34px]"><i class="h-5 w-[26px] ${cls}"></i></li>`;
        const tables = ['BlockZones_Select_Stat', 'BlockZones_Select_Stat', 'BlockZones_Select_Stat', 'Output Table:Buildings_', 'BlockZones_Selec__Stat', 'BlockZones_Selec_Table', 'EnumerationAre_Fe_Sta'];
        document.getElementById('contents').innerHTML = legend
            + layer('', 'ModelBuilder')
            + layer('pl-3.5', 'Output Feature Class (') + swatch('border border-[#888] bg-[#fafad2]')
            + layer('pl-3.5', 'LandUse_Intersect:Buil') + swatch('border-2 border-black')
            + layer('pl-3.5', 'LandUse_Select:LandU') + swatch('border border-[#888] bg-[#d2fad2]')
            + '<li class="flex h-[30px] items-center gap-1.5 font-semibold"><svg class="h-2.5 w-2.5" viewBox="0 0 10 10"><path d="M9 1v8H1z" fill="#666"/></svg>Standalone Tables</li>'
            + tables.map((name, i) =>
                `<li class="ml-[14px] flex h-[30px] items-center gap-[9px] border ${i === 6 ? 'border-[#0079c8] bg-[#c5dcef]' : 'border-transparent'}">${use('table', 'h-[18px] w-5 shrink-0')}${name}</li>`
            ).join('');

        // Attribute table
        const rows = [
            ['12', '12301830008', 19376, 301, 262, 1, '13601.564318', '3704'],
            ['1', '12301810024', 15587, 229, 212, 21, '16080.580688', '34666'],
            ['23', '12301790039', 5993, 185, 176, 15, '4583.675465', '8109'],
            ['39', '12301790034', 5846, 187, 183, 29, '3457.688345', '6275'],
            ['8', '12301790087', 5270, 268, 230, 10, '5294.175384', '10170'],
            ['1', '12301810066', 4130, 244, 212, 18, '4507.905617', '9584'],
        ];
        document.getElementById('rows').innerHTML = rows.map((r, i) => {
            const on = i === 3;
            const num = r.slice(3, 7).map(v => `<td class="border-r border-[#d0d0d0] pr-[5px] text-right">${v}</td>`).join('');
            return `<tr class="h-[31px] border-t border-[#d0d0d0] ${i % 2 ? 'bg-[#eaeaea]' : 'bg-white'}">
                <td class="pl-[5px] text-[13px] ${on ? 'border-r-3 border-[#0079b8] bg-[#c5e0f5]' : 'bg-[#eaeaea]'}">${i + 1}</td>
                <td class="border-r border-[#d0d0d0]"></td>
                <td class="border-r border-[#d0d0d0] pl-[5px]">${r[0]}</td>
                <td class="border-r border-[#d0d0d0] pl-[6px]">${r[1]}</td>
                <td class="border-r border-[#d0d0d0] pr-[6px] text-right ${on ? 'bg-[#c5e0f5]' : ''}">${r[2]}</td>
                ${num}
                <td class="${r[7].length > 4 ? 'pl-[5px]' : 'pl-[13px]'}">${r[7]}</td>
            </tr>`;
        }).join('');

        // Sample points
        const points = '643,514 635,530 670,529 683,533 673,538 640,552 628,561 664,562 646,571 679,572 697,563 710,560 727,577 695,583 670,605 712,609 734,616 758,610 700,624 755,635 729,642 712,650 772,654 762,670 749,672 730,673 715,679 752,690 589,581 645,629 579,634 545,648 567,649 616,662 562,677 595,681 605,686 638,677 623,689 556,697 579,699 618,702 '
            + '937,412 975,434 827,432 845,402 817,466 880,437 887,450 860,466 860,478 839,488 876,485 898,480 864,497 859,506 879,508 859,518 905,529 934,535 914,452 933,453 942,444 960,463 991,469 942,484 964,512 829,516 849,533 831,543 873,549 940,563 970,555 1005,552 999,572 900,577 855,577 831,580 873,585 940,586 983,595 797,588 828,597 847,595 902,606 860,612 937,611 953,611 825,615 842,620 922,623 975,628 1009,625 797,626 868,637 834,646 812,649 854,650 883,650 907,654 927,648 942,644 958,642 990,649 1039,650 978,663 979,680 964,673 946,673 905,682 950,688 984,693 838,671 809,671 790,677 782,691 795,656 '
            + '544,711 567,717 560,724 548,734 540,751 543,773 537,779 508,786 522,801 603,709 618,725 667,720 583,726 595,738 609,745 570,749 586,767 622,757 622,772 644,778 663,772 632,790 647,793 646,824 555,795 598,799 569,817 535,820 601,831 559,841 534,860 564,860 605,862 570,885 596,886 643,866 574,915 709,704 743,704 759,714 775,704 768,726 725,748 747,759 766,771 770,794 712,836 '
            + '830,696 797,699 863,700 884,707 904,703 936,705 958,711 805,714 843,723 865,717 875,720 916,717 893,728 936,734 957,746 985,754 782,729 798,739 830,745 791,756 811,761 865,753 891,748 909,751 926,755 788,776 803,781 819,778 906,771 950,771 789,799 801,803 831,795 861,791 876,782 897,790 910,787 918,781 928,785 932,792 924,794 911,799 918,801 923,810 937,813 953,799 975,792 995,797 1036,814 966,824 986,829 998,844 1034,854 1029,874 991,869 968,856 949,844 936,848 920,824 899,822 887,812 867,818 790,818 780,825 800,832 841,831 822,856 883,838 898,847 918,842 869,851 855,859 894,860 915,858 930,873 941,869 865,878 887,879 902,878 918,882 940,888 880,892 904,894 888,906 919,903 933,896 936,909 970,890 841,901';
        document.getElementById('dots').innerHTML = points.split(' ').map(p => {
            const [x, y] = p.split(',');
            return `<circle cx="${x}" cy="${y}" r="3.500"/>`;
        }).join('');

        // Population labels
        const labels = [
            [416, 591, 573], [4130, 664, 536], [2368, 731, 607], [730, 651, 629], [3241, 575, 649], [1794, 716, 697], [1420, 827, 435],
            [2198, 950, 489], [5270, 885, 509], [1330, 820, 535], [1853, 795, 614], [858, 1025, 649], [19376, 928, 686], [3724, 528, 715],
            [3186, 649, 715], [1097, 590, 739], [756, 573, 771], [2149, 498, 797], [1640, 548, 812], [1150, 588, 808], [3722, 652, 805],
            [1393, 554, 872], [1164, 599, 873], [675, 664, 904], [524, 588, 942], [355, 729, 845], [794, 771, 731], [15587, 819, 761],
            [1784, 808, 848], [5846, 888, 840], [5993, 907, 911], [323, 968, 903], [1417, 1007, 729], [723, 1024, 819], [1380, 1040, 862],
        ];
        document.getElementById('labels').innerHTML = labels.map(([t, x, y]) => `<text x="${x}" y="${y + 6}">${t}</text>`).join('');

        // Model nodes: [shape, colour, x, y, lines]
        const nodes = [
            ['e', '#84cf76', 1382, 269, ['', '(2)']],
            ['r', '#f3df7b', 1382, 342, ['Calculate Field', '(5)']],
            ['e', '#84cf76', 1381, 414, ['BlockZones_S...', '(4)']],
            ['e', '#84cf76', 1225, 414, ['Output Feature', 'Class']],
            ['r', '#f3df7b', 1225, 488, ['Join Field (3)']],
            ['e', '#84cf76', 1225, 560, ['BlockZones_S...']],
            ['e', '#68a6d0', 1329, 560, ['EnumerationA...']],
            ['r', '#f3df7b', 1225, 633, ['Select (4)']],
            ['r', '#f3df7b', 1329, 633, ['Feature To Point']],
            ['e', '#84cf76', 1225, 706, ['Output Feature', 'Class (2)']],
            ['e', '#84cf76', 1329, 706, ['Output Feature', 'Class (3)']],
            ['r', '#f3df7b', 1225, 779, ['Spatial Join']],
            ['e', '#84cf76', 1225, 852, ['BlockZones_S...']],
            ['r', '#f3df7b', 1441, 835, ['Summary', 'Statistics (5)']],
            ['e', '#84cf76', 1467, 921, ['EnumerationA...']],
        ];
        document.getElementById('nodes').innerHTML = nodes.map(([shape, fill, x, y, lines]) => {
            const body = (dx, dy, paint) => shape === 'e'
                ? `<ellipse cx="${x + dx}" cy="${y + dy}" rx="44" ry="28" ${paint}/>`
                : `<rect x="${x - 44 + dx}" y="${y - 28 + dy}" width="88" height="56" rx="6" ${paint}/>`;
            const text = lines.map((t, i) => `<text x="${x}" y="${y + 4 + (i - (lines.length - 1) / 2) * 12}" fill="#222" stroke="#222" stroke-width=".3">${t}</text>`).join('');
            return body(2, 3, 'fill="#bdbdbd"') + body(0, 0, `fill="${fill}"`) + text;
        }).join('');
        document.getElementById('links').innerHTML = [
            'M1381 298V313', 'M1381 370V386', 'M1344 430L1269 467', 'M1225 442V460', 'M1225 516V532', 'M1225 588V605', 'M1329 588V605',
            'M1225 661V678', 'M1329 661V678', 'M1225 734V751', 'M1301 728L1263 752', 'M1352 732L1416 807', 'M1225 807V824', 'M1450 863L1458 893',
        ].map(d => `<path d="${d}" marker-end="url(#arrow)"/>`).join('');
    </script>
</body>
</html>
